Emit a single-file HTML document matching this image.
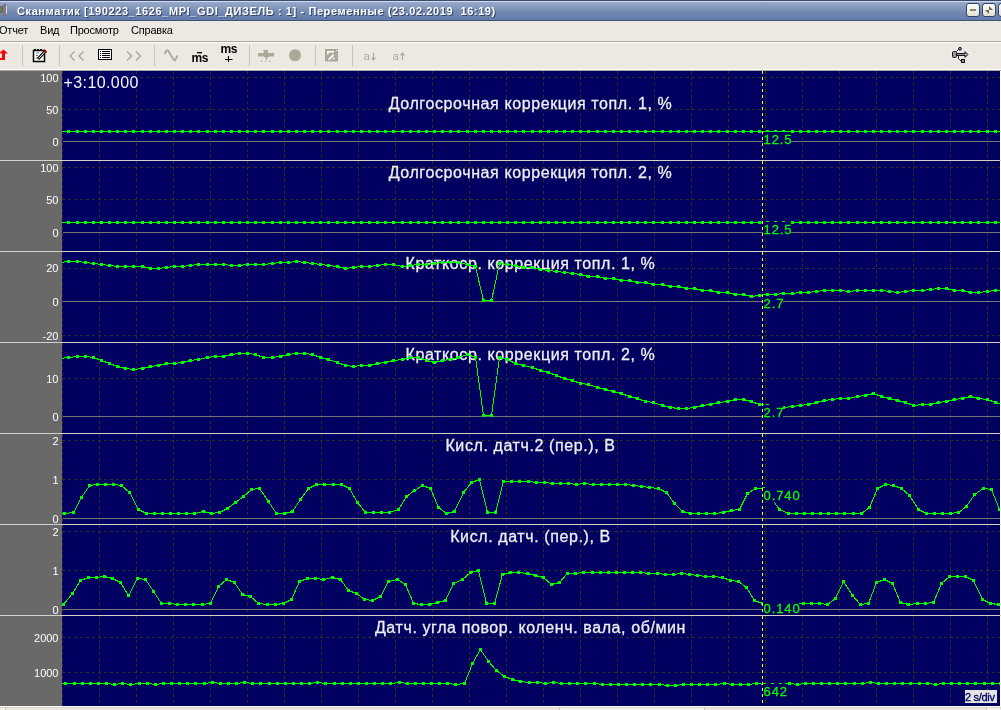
<!DOCTYPE html>
<html><head><meta charset="utf-8"><style>
html,body{margin:0;padding:0;}
body{width:1001px;height:710px;overflow:hidden;position:relative;background:#ebe9e1;font-family:"Liberation Sans",sans-serif;}
#title{position:absolute;left:0;top:0;width:1001px;height:21px;background:linear-gradient(#38496b 0px,#38496b 1px,#d2dbee 1px,#d2dbee 2px,#97a9c9 2px,#8a9ec2 6px,#7389b3 12px,#607ca9 20px,#42537a 20px);}
#title .t{will-change:transform;position:absolute;left:17px;top:5px;font-size:11px;font-weight:bold;color:#fff;white-space:pre;letter-spacing:0.6px;text-shadow:1px 1px 0 #344466;}
#menu{will-change:transform;position:absolute;left:0;top:21px;width:1001px;height:20px;background:#ebe9e1;border-bottom:1px solid #aca899;}
#menu span{position:absolute;top:3px;font-size:11px;color:#000;letter-spacing:-0.2px}
#tb{position:absolute;left:0;top:42px;width:1001px;height:26px;border-top:1px solid #fff;border-bottom:1px solid #fff;background:#ebe9e1;}
.btn{position:absolute;top:3px;width:12px;height:12px;border:1px solid #31466e;border-radius:3px;background:linear-gradient(#fdfcf8,#e4e0d0);}
</style></head><body>
<div id="title"><div class="t">Сканматик [190223_1626_MPI_GDI_ДИЗЕЛЬ : 1] - Переменные (23.02.2019  16:19)</div>
<div class="btn" style="left:966px"><div style="position:absolute;left:3px;top:5px;width:6px;height:2px;background:#8a8670"></div></div>
<div class="btn" style="left:982px"><svg width="12" height="12" style="position:absolute;left:0;top:0"><path d="M6 2l4 4h-4zM2 6h4v4z" fill="#6e6a55"/></svg></div>
<div class="btn" style="left:998px"></div>
<svg width="10" height="16" style="position:absolute;left:0;top:3px"><rect x="0" y="3" width="3" height="7" fill="#6a6a6a"/><rect x="3" y="1" width="3" height="12" fill="#7c7c7c"/><rect x="6" y="3" width="1" height="8" fill="#e8cce0"/><rect x="0" y="6" width="1" height="1" fill="#20d020"/></svg>
</div>
<div id="menu"><span style="left:-1px">Отчет</span><span style="left:40px">Вид</span><span style="left:70px">Просмотр</span><span style="left:131px">Справка</span></div>
<div id="tb"></div>
<svg width="1001" height="28" viewBox="0 42 1001 28" style="position:absolute;left:0;top:42px;will-change:transform" font-family="Liberation Sans">
<g fill="#cac6b7">
<rect x="22" y="45" width="1" height="21"/><rect x="59" y="45" width="1" height="21"/><rect x="154" y="45" width="1" height="21"/>
<rect x="249" y="45" width="1" height="21"/><rect x="315" y="45" width="1" height="21"/><rect x="352" y="45" width="1" height="21"/>
</g>
<path d="M-1 53L3.5 49.5L8 53.5H5V60H-1V58H2V53.5Z" fill="#ff0000"/>
<path d="M33.5 50.5h11v11h-11z" fill="#fff" stroke="#000" stroke-width="1.5"/>
<path d="M34 49h2v2h-2zM37 49h2v2h-2zM40 49h2v2h-2z" fill="#000"/>
<path d="M36 53h3M36 55.5h2M36 58h2" stroke="#777" stroke-width="1"/>
<path d="M38 59L45.5 51" stroke="#000" stroke-width="3"/><path d="M38.5 58.5L45 51.5" stroke="#fff" stroke-width="1"/>
<path d="M44 50l2.5 2.5" stroke="#a00" stroke-width="2"/>
<g fill="none" stroke="#aca899" stroke-width="1.4">
<path d="M74.5 51.5L70 56L74.5 60.5M83.5 51.5L79 56L83.5 60.5"/>
<path d="M127 51.5L131.5 56L127 60.5M136 51.5L140.5 56L136 60.5"/>
<path d="M164.5 54L166.5 50.5L168 50.5L173.5 59.5L175 60.5L177.5 55.5" stroke-width="1.8" stroke-linejoin="round"/>
</g>
<rect x="98" y="49" width="14" height="11" fill="#000"/><rect x="99" y="50" width="12" height="9" fill="#fff"/>
<g fill="#000"><rect x="100" y="51" width="1" height="1"/><rect x="100" y="53" width="1" height="1"/><rect x="100" y="55" width="1" height="1"/><rect x="100" y="57" width="1" height="1"/>
<rect x="102" y="51" width="8" height="1"/><rect x="102" y="53" width="8" height="1"/><rect x="102" y="55" width="8" height="1"/><rect x="102" y="57" width="8" height="1"/></g>
<text x="191.5" y="61.5" font-size="12" font-weight="bold" fill="#000" letter-spacing="-0.3">ms</text>
<rect x="197" y="52" width="5" height="1.3" fill="#000"/>
<text x="220.5" y="53" font-size="12" font-weight="bold" fill="#000" letter-spacing="-0.3">ms</text>
<path d="M225 59.5h7.5M228.5 56v6" stroke="#000" stroke-width="1.1"/>
<g fill="#aca899">
<path d="M258 53h16v3.5h-16z"/><path d="M263 50h5v3h1v4h-1.5v2.5h-2v-2.5h-1.5v-4z"/>
<rect x="261" y="60.5" width="1.2" height="1.5"/><rect x="265" y="60.5" width="1.2" height="1.5"/><rect x="269" y="60.5" width="1.2" height="1.5"/>
<circle cx="295" cy="55.2" r="6"/>
<rect x="325" y="49" width="13" height="12.5"/>
<path d="M327 51h7v1.6h-5.5v2h-1.5z" fill="#fff"/><path d="M328 59.5l5-5.5l1.2 1.2l-5 5.3z" fill="#fff"/><rect x="333" y="57.5" width="1.3" height="2" fill="#fff"/><rect x="336" y="50" width="1" height="1" fill="#fff"/>
</g>
<text x="363.5" y="60" font-size="11.5" fill="#aca899">a</text><path d="M373.5 53v6.5M371.5 57.5l2 2.5l2-2.5" stroke="#aca899" stroke-width="1.2" fill="none"/>
<text x="392.5" y="60" font-size="11.5" fill="#aca899">a</text><path d="M402.5 53v7M400.5 55.5l2-2.5l2 2.5" stroke="#aca899" stroke-width="1.2" fill="none"/>
<g stroke="#fff" stroke-width="3" fill="none" opacity="0.8"><path d="M953 52h3v5h-3z M956 54.3h10 M964.5 51.5l3.5 2.8l-3.5 2.8 M956.5 51.5l3-2.5 M958.5 56v3l2.5 2.5"/></g>
<g stroke="#111" stroke-width="1" fill="#9a9a9a">
<rect x="952.5" y="51.5" width="4" height="6" rx="1"/>
<path d="M956.5 53.5h8.5v-2l3 3l-3 3v-2h-8.5z"/>
<path d="M956.5 51.5L959 49" fill="none"/><circle cx="960" cy="48.8" r="1.4"/>
<path d="M958.5 56v3l2.5 2" fill="none"/><rect x="961.5" y="59.5" width="3" height="3"/>
</g>
</svg>
<svg width="1001" height="640" viewBox="0 70 1001 640" style="position:absolute;left:0;top:70px;display:block;will-change:transform" font-family="Liberation Sans">
<rect x="0" y="70" width="1001" height="1" fill="#a8a59a"/>
<rect x="0" y="71" width="62" height="635" fill="#696969"/>
<rect x="62" y="71" width="938" height="635" fill="#000060"/>
<rect x="1000" y="71" width="1" height="635" fill="#ffffff"/>
<clipPath id="c0"><rect x="62" y="71" width="938" height="89"/></clipPath>
<g clip-path="url(#c0)"><path d="M62.5 71V160M99.5 71V160M136.5 71V160M173.5 71V160M210.5 71V160M247.5 71V160M284.5 71V160M321.5 71V160M358.5 71V160M395.5 71V160M432.5 71V160M469.5 71V160M506.5 71V160M543.5 71V160M580.5 71V160M617.5 71V160M654.5 71V160M691.5 71V160M728.5 71V160M765.5 71V160M802.5 71V160M839.5 71V160M876.5 71V160M913.5 71V160M950.5 71V160M987.5 71V160M62 77.5H1000M62 109.5H1000" stroke="#302e24" stroke-width="1" stroke-dasharray="3 3" fill="none" shape-rendering="crispEdges"/><path d="M63 141.5H1000" stroke="#727272" stroke-width="1" shape-rendering="crispEdges"/><rect x="63" y="74" width="76" height="16" fill="#000060"/><text x="63.5" y="88" font-size="16" fill="#f4f4f4" letter-spacing="0.4">+3:10.000</text><text x="530.5" y="109" text-anchor="middle" font-size="16" letter-spacing="0.6" fill="#eeeeee" stroke="#eeeeee" stroke-width="0.3">Долгосрочная коррекция топл. 1, %</text><polyline points="60.5,131.5 68.5,131.5 77.5,131.5 85.5,131.5 93.5,131.5 101.5,131.5 109.5,131.5 117.5,131.5 125.5,131.5 133.5,131.5 142.5,131.5 150.5,131.5 158.5,131.5 166.5,131.5 174.5,131.5 182.5,131.5 190.5,131.5 198.5,131.5 207.5,131.5 215.5,131.5 223.5,131.5 231.5,131.5 239.5,131.5 247.5,131.5 255.5,131.5 263.5,131.5 272.5,131.5 280.5,131.5 288.5,131.5 296.5,131.5 304.5,131.5 312.5,131.5 320.5,131.5 328.5,131.5 337.5,131.5 345.5,131.5 353.5,131.5 361.5,131.5 369.5,131.5 377.5,131.5 385.5,131.5 393.5,131.5 402.5,131.5 410.5,131.5 418.5,131.5 426.5,131.5 434.5,131.5 442.5,131.5 450.5,131.5 458.5,131.5 467.5,131.5 475.5,131.5 483.5,131.5 491.5,131.5 499.5,131.5 507.5,131.5 515.5,131.5 523.5,131.5 532.5,131.5 540.5,131.5 548.5,131.5 556.5,131.5 564.5,131.5 572.5,131.5 580.5,131.5 588.5,131.5 597.5,131.5 605.5,131.5 613.5,131.5 621.5,131.5 629.5,131.5 637.5,131.5 645.5,131.5 653.5,131.5 662.5,131.5 670.5,131.5 678.5,131.5 686.5,131.5 694.5,131.5 702.5,131.5 710.5,131.5 718.5,131.5 727.5,131.5 735.5,131.5 743.5,131.5 751.5,131.5 759.5,131.5 767.5,131.5 775.5,131.5 783.5,131.5 792.5,131.5 800.5,131.5 808.5,131.5 816.5,131.5 824.5,131.5 832.5,131.5 840.5,131.5 848.5,131.5 857.5,131.5 865.5,131.5 873.5,131.5 881.5,131.5 889.5,131.5 897.5,131.5 905.5,131.5 913.5,131.5 922.5,131.5 930.5,131.5 938.5,131.5 946.5,131.5 954.5,131.5 962.5,131.5 970.5,131.5 978.5,131.5 987.5,131.5 995.5,131.5 1003.5,131.5" stroke="#00ff00" stroke-width="1" fill="none" shape-rendering="crispEdges"/><path d="M59 130h3v3h-3zM67 130h3v3h-3zM76 130h3v3h-3zM84 130h3v3h-3zM92 130h3v3h-3zM100 130h3v3h-3zM108 130h3v3h-3zM116 130h3v3h-3zM124 130h3v3h-3zM132 130h3v3h-3zM141 130h3v3h-3zM149 130h3v3h-3zM157 130h3v3h-3zM165 130h3v3h-3zM173 130h3v3h-3zM181 130h3v3h-3zM189 130h3v3h-3zM197 130h3v3h-3zM206 130h3v3h-3zM214 130h3v3h-3zM222 130h3v3h-3zM230 130h3v3h-3zM238 130h3v3h-3zM246 130h3v3h-3zM254 130h3v3h-3zM262 130h3v3h-3zM271 130h3v3h-3zM279 130h3v3h-3zM287 130h3v3h-3zM295 130h3v3h-3zM303 130h3v3h-3zM311 130h3v3h-3zM319 130h3v3h-3zM327 130h3v3h-3zM336 130h3v3h-3zM344 130h3v3h-3zM352 130h3v3h-3zM360 130h3v3h-3zM368 130h3v3h-3zM376 130h3v3h-3zM384 130h3v3h-3zM392 130h3v3h-3zM401 130h3v3h-3zM409 130h3v3h-3zM417 130h3v3h-3zM425 130h3v3h-3zM433 130h3v3h-3zM441 130h3v3h-3zM449 130h3v3h-3zM457 130h3v3h-3zM466 130h3v3h-3zM474 130h3v3h-3zM482 130h3v3h-3zM490 130h3v3h-3zM498 130h3v3h-3zM506 130h3v3h-3zM514 130h3v3h-3zM522 130h3v3h-3zM531 130h3v3h-3zM539 130h3v3h-3zM547 130h3v3h-3zM555 130h3v3h-3zM563 130h3v3h-3zM571 130h3v3h-3zM579 130h3v3h-3zM587 130h3v3h-3zM596 130h3v3h-3zM604 130h3v3h-3zM612 130h3v3h-3zM620 130h3v3h-3zM628 130h3v3h-3zM636 130h3v3h-3zM644 130h3v3h-3zM652 130h3v3h-3zM661 130h3v3h-3zM669 130h3v3h-3zM677 130h3v3h-3zM685 130h3v3h-3zM693 130h3v3h-3zM701 130h3v3h-3zM709 130h3v3h-3zM717 130h3v3h-3zM726 130h3v3h-3zM734 130h3v3h-3zM742 130h3v3h-3zM750 130h3v3h-3zM758 130h3v3h-3zM766 130h3v3h-3zM774 130h3v3h-3zM782 130h3v3h-3zM791 130h3v3h-3zM799 130h3v3h-3zM807 130h3v3h-3zM815 130h3v3h-3zM823 130h3v3h-3zM831 130h3v3h-3zM839 130h3v3h-3zM847 130h3v3h-3zM856 130h3v3h-3zM864 130h3v3h-3zM872 130h3v3h-3zM880 130h3v3h-3zM888 130h3v3h-3zM896 130h3v3h-3zM904 130h3v3h-3zM912 130h3v3h-3zM921 130h3v3h-3zM929 130h3v3h-3zM937 130h3v3h-3zM945 130h3v3h-3zM953 130h3v3h-3zM961 130h3v3h-3zM969 130h3v3h-3zM977 130h3v3h-3zM986 130h3v3h-3zM994 130h3v3h-3zM1002 130h3v3h-3z" fill="#00ff00" shape-rendering="crispEdges"/><path d="M762.5 71V160" stroke="#ffff00" stroke-width="1" stroke-dasharray="3 3" shape-rendering="crispEdges"/><rect x="763" y="132" width="28" height="14" fill="#000060"/><text x="763.5" y="144" font-size="13" letter-spacing="0.9" fill="#00ff00" stroke="#00ff00" stroke-width="0.3">12.5</text></g>
<text x="58.5" y="82" text-anchor="end" font-size="11" fill="#ffffff">100</text>
<text x="58.5" y="114" text-anchor="end" font-size="11" fill="#ffffff">50</text>
<text x="58.5" y="146" text-anchor="end" font-size="11" fill="#ffffff">0</text>
<rect x="0" y="160" width="1001" height="1" fill="#d4d0c8"/>
<clipPath id="c1"><rect x="62" y="161" width="938" height="90"/></clipPath>
<g clip-path="url(#c1)"><path d="M62.5 161V251M99.5 161V251M136.5 161V251M173.5 161V251M210.5 161V251M247.5 161V251M284.5 161V251M321.5 161V251M358.5 161V251M395.5 161V251M432.5 161V251M469.5 161V251M506.5 161V251M543.5 161V251M580.5 161V251M617.5 161V251M654.5 161V251M691.5 161V251M728.5 161V251M765.5 161V251M802.5 161V251M839.5 161V251M876.5 161V251M913.5 161V251M950.5 161V251M987.5 161V251M62 167.5H1000M62 199.5H1000" stroke="#302e24" stroke-width="1" stroke-dasharray="3 3" fill="none" shape-rendering="crispEdges"/><path d="M63 232.5H1000" stroke="#727272" stroke-width="1" shape-rendering="crispEdges"/><text x="530.5" y="178" text-anchor="middle" font-size="16" letter-spacing="0.6" fill="#eeeeee" stroke="#eeeeee" stroke-width="0.3">Долгосрочная коррекция топл. 2, %</text><polyline points="60.5,222.5 68.5,222.5 77.5,222.5 85.5,222.5 93.5,222.5 101.5,222.5 109.5,222.5 117.5,222.5 125.5,222.5 133.5,222.5 142.5,222.5 150.5,222.5 158.5,222.5 166.5,222.5 174.5,222.5 182.5,222.5 190.5,222.5 198.5,222.5 207.5,222.5 215.5,222.5 223.5,222.5 231.5,222.5 239.5,222.5 247.5,222.5 255.5,222.5 263.5,222.5 272.5,222.5 280.5,222.5 288.5,222.5 296.5,222.5 304.5,222.5 312.5,222.5 320.5,222.5 328.5,222.5 337.5,222.5 345.5,222.5 353.5,222.5 361.5,222.5 369.5,222.5 377.5,222.5 385.5,222.5 393.5,222.5 402.5,222.5 410.5,222.5 418.5,222.5 426.5,222.5 434.5,222.5 442.5,222.5 450.5,222.5 458.5,222.5 467.5,222.5 475.5,222.5 483.5,222.5 491.5,222.5 499.5,222.5 507.5,222.5 515.5,222.5 523.5,222.5 532.5,222.5 540.5,222.5 548.5,222.5 556.5,222.5 564.5,222.5 572.5,222.5 580.5,222.5 588.5,222.5 597.5,222.5 605.5,222.5 613.5,222.5 621.5,222.5 629.5,222.5 637.5,222.5 645.5,222.5 653.5,222.5 662.5,222.5 670.5,222.5 678.5,222.5 686.5,222.5 694.5,222.5 702.5,222.5 710.5,222.5 718.5,222.5 727.5,222.5 735.5,222.5 743.5,222.5 751.5,222.5 759.5,222.5 767.5,222.5 775.5,222.5 783.5,222.5 792.5,222.5 800.5,222.5 808.5,222.5 816.5,222.5 824.5,222.5 832.5,222.5 840.5,222.5 848.5,222.5 857.5,222.5 865.5,222.5 873.5,222.5 881.5,222.5 889.5,222.5 897.5,222.5 905.5,222.5 913.5,222.5 922.5,222.5 930.5,222.5 938.5,222.5 946.5,222.5 954.5,222.5 962.5,222.5 970.5,222.5 978.5,222.5 987.5,222.5 995.5,222.5 1003.5,222.5" stroke="#00ff00" stroke-width="1" fill="none" shape-rendering="crispEdges"/><path d="M59 221h3v3h-3zM67 221h3v3h-3zM76 221h3v3h-3zM84 221h3v3h-3zM92 221h3v3h-3zM100 221h3v3h-3zM108 221h3v3h-3zM116 221h3v3h-3zM124 221h3v3h-3zM132 221h3v3h-3zM141 221h3v3h-3zM149 221h3v3h-3zM157 221h3v3h-3zM165 221h3v3h-3zM173 221h3v3h-3zM181 221h3v3h-3zM189 221h3v3h-3zM197 221h3v3h-3zM206 221h3v3h-3zM214 221h3v3h-3zM222 221h3v3h-3zM230 221h3v3h-3zM238 221h3v3h-3zM246 221h3v3h-3zM254 221h3v3h-3zM262 221h3v3h-3zM271 221h3v3h-3zM279 221h3v3h-3zM287 221h3v3h-3zM295 221h3v3h-3zM303 221h3v3h-3zM311 221h3v3h-3zM319 221h3v3h-3zM327 221h3v3h-3zM336 221h3v3h-3zM344 221h3v3h-3zM352 221h3v3h-3zM360 221h3v3h-3zM368 221h3v3h-3zM376 221h3v3h-3zM384 221h3v3h-3zM392 221h3v3h-3zM401 221h3v3h-3zM409 221h3v3h-3zM417 221h3v3h-3zM425 221h3v3h-3zM433 221h3v3h-3zM441 221h3v3h-3zM449 221h3v3h-3zM457 221h3v3h-3zM466 221h3v3h-3zM474 221h3v3h-3zM482 221h3v3h-3zM490 221h3v3h-3zM498 221h3v3h-3zM506 221h3v3h-3zM514 221h3v3h-3zM522 221h3v3h-3zM531 221h3v3h-3zM539 221h3v3h-3zM547 221h3v3h-3zM555 221h3v3h-3zM563 221h3v3h-3zM571 221h3v3h-3zM579 221h3v3h-3zM587 221h3v3h-3zM596 221h3v3h-3zM604 221h3v3h-3zM612 221h3v3h-3zM620 221h3v3h-3zM628 221h3v3h-3zM636 221h3v3h-3zM644 221h3v3h-3zM652 221h3v3h-3zM661 221h3v3h-3zM669 221h3v3h-3zM677 221h3v3h-3zM685 221h3v3h-3zM693 221h3v3h-3zM701 221h3v3h-3zM709 221h3v3h-3zM717 221h3v3h-3zM726 221h3v3h-3zM734 221h3v3h-3zM742 221h3v3h-3zM750 221h3v3h-3zM758 221h3v3h-3zM766 221h3v3h-3zM774 221h3v3h-3zM782 221h3v3h-3zM791 221h3v3h-3zM799 221h3v3h-3zM807 221h3v3h-3zM815 221h3v3h-3zM823 221h3v3h-3zM831 221h3v3h-3zM839 221h3v3h-3zM847 221h3v3h-3zM856 221h3v3h-3zM864 221h3v3h-3zM872 221h3v3h-3zM880 221h3v3h-3zM888 221h3v3h-3zM896 221h3v3h-3zM904 221h3v3h-3zM912 221h3v3h-3zM921 221h3v3h-3zM929 221h3v3h-3zM937 221h3v3h-3zM945 221h3v3h-3zM953 221h3v3h-3zM961 221h3v3h-3zM969 221h3v3h-3zM977 221h3v3h-3zM986 221h3v3h-3zM994 221h3v3h-3zM1002 221h3v3h-3z" fill="#00ff00" shape-rendering="crispEdges"/><path d="M762.5 161V251" stroke="#ffff00" stroke-width="1" stroke-dasharray="3 3" shape-rendering="crispEdges"/><rect x="763" y="222" width="28" height="14" fill="#000060"/><text x="763.5" y="234" font-size="13" letter-spacing="0.9" fill="#00ff00" stroke="#00ff00" stroke-width="0.3">12.5</text></g>
<text x="58.5" y="172" text-anchor="end" font-size="11" fill="#ffffff">100</text>
<text x="58.5" y="204" text-anchor="end" font-size="11" fill="#ffffff">50</text>
<text x="58.5" y="237" text-anchor="end" font-size="11" fill="#ffffff">0</text>
<rect x="0" y="251" width="1001" height="1" fill="#d4d0c8"/>
<clipPath id="c2"><rect x="62" y="252" width="938" height="90"/></clipPath>
<g clip-path="url(#c2)"><path d="M62.5 252V342M99.5 252V342M136.5 252V342M173.5 252V342M210.5 252V342M247.5 252V342M284.5 252V342M321.5 252V342M358.5 252V342M395.5 252V342M432.5 252V342M469.5 252V342M506.5 252V342M543.5 252V342M580.5 252V342M617.5 252V342M654.5 252V342M691.5 252V342M728.5 252V342M765.5 252V342M802.5 252V342M839.5 252V342M876.5 252V342M913.5 252V342M950.5 252V342M987.5 252V342M62 268.5H1000M62 335.5H1000" stroke="#302e24" stroke-width="1" stroke-dasharray="3 3" fill="none" shape-rendering="crispEdges"/><path d="M63 301.5H1000" stroke="#727272" stroke-width="1" shape-rendering="crispEdges"/><text x="530.5" y="269" text-anchor="middle" font-size="16" letter-spacing="0.6" fill="#eeeeee" stroke="#eeeeee" stroke-width="0.3">Краткоср. коррекция топл. 1, %</text><polyline points="60.5,262.5 68.5,261.5 77.5,261.5 85.5,262.5 93.5,263.5 101.5,264.5 109.5,265.5 117.5,266.5 125.5,266.5 133.5,266.5 142.5,266.5 150.5,268.5 158.5,268.5 166.5,267.5 174.5,266.5 182.5,266.5 190.5,265.5 198.5,264.5 207.5,264.5 215.5,264.5 223.5,264.5 231.5,265.5 239.5,265.5 247.5,264.5 255.5,264.5 263.5,264.5 272.5,263.5 280.5,262.5 288.5,262.5 296.5,261.5 304.5,262.5 312.5,263.5 320.5,264.5 328.5,265.5 337.5,266.5 345.5,268.5 353.5,267.5 361.5,266.5 369.5,266.5 377.5,265.5 385.5,264.5 393.5,264.5 402.5,266.5 410.5,265.5 418.5,264.5 426.5,264.5 434.5,263.5 442.5,262.5 450.5,262.5 458.5,262.5 467.5,264.5 475.5,266.5 483.5,300.5 491.5,300.5 499.5,263.5 507.5,264.5 515.5,265.5 523.5,267.5 532.5,267.5 540.5,269.5 548.5,270.5 556.5,271.5 564.5,272.5 572.5,273.5 580.5,274.5 588.5,276.5 597.5,276.5 605.5,278.5 613.5,278.5 621.5,280.5 629.5,280.5 637.5,282.5 645.5,282.5 653.5,284.5 662.5,284.5 670.5,286.5 678.5,286.5 686.5,288.5 694.5,288.5 702.5,290.5 710.5,290.5 718.5,292.5 727.5,292.5 735.5,294.5 743.5,294.5 751.5,296.5 759.5,295.5 767.5,294.5 775.5,294.5 783.5,293.5 792.5,293.5 800.5,292.5 808.5,292.5 816.5,291.5 824.5,290.5 832.5,290.5 840.5,290.5 848.5,291.5 857.5,290.5 865.5,290.5 873.5,290.5 881.5,290.5 889.5,291.5 897.5,292.5 905.5,291.5 913.5,290.5 922.5,290.5 930.5,289.5 938.5,288.5 946.5,288.5 954.5,290.5 962.5,290.5 970.5,292.5 978.5,292.5 987.5,291.5 995.5,290.5 1003.5,290.5" stroke="#00ff00" stroke-width="1" fill="none" shape-rendering="crispEdges"/><path d="M59 261h3v3h-3zM67 260h3v3h-3zM76 260h3v3h-3zM84 261h3v3h-3zM92 262h3v3h-3zM100 263h3v3h-3zM108 264h3v3h-3zM116 265h3v3h-3zM124 265h3v3h-3zM132 265h3v3h-3zM141 265h3v3h-3zM149 267h3v3h-3zM157 267h3v3h-3zM165 266h3v3h-3zM173 265h3v3h-3zM181 265h3v3h-3zM189 264h3v3h-3zM197 263h3v3h-3zM206 263h3v3h-3zM214 263h3v3h-3zM222 263h3v3h-3zM230 264h3v3h-3zM238 264h3v3h-3zM246 263h3v3h-3zM254 263h3v3h-3zM262 263h3v3h-3zM271 262h3v3h-3zM279 261h3v3h-3zM287 261h3v3h-3zM295 260h3v3h-3zM303 261h3v3h-3zM311 262h3v3h-3zM319 263h3v3h-3zM327 264h3v3h-3zM336 265h3v3h-3zM344 267h3v3h-3zM352 266h3v3h-3zM360 265h3v3h-3zM368 265h3v3h-3zM376 264h3v3h-3zM384 263h3v3h-3zM392 263h3v3h-3zM401 265h3v3h-3zM409 264h3v3h-3zM417 263h3v3h-3zM425 263h3v3h-3zM433 262h3v3h-3zM441 261h3v3h-3zM449 261h3v3h-3zM457 261h3v3h-3zM466 263h3v3h-3zM474 265h3v3h-3zM482 299h3v3h-3zM490 299h3v3h-3zM498 262h3v3h-3zM506 263h3v3h-3zM514 264h3v3h-3zM522 266h3v3h-3zM531 266h3v3h-3zM539 268h3v3h-3zM547 269h3v3h-3zM555 270h3v3h-3zM563 271h3v3h-3zM571 272h3v3h-3zM579 273h3v3h-3zM587 275h3v3h-3zM596 275h3v3h-3zM604 277h3v3h-3zM612 277h3v3h-3zM620 279h3v3h-3zM628 279h3v3h-3zM636 281h3v3h-3zM644 281h3v3h-3zM652 283h3v3h-3zM661 283h3v3h-3zM669 285h3v3h-3zM677 285h3v3h-3zM685 287h3v3h-3zM693 287h3v3h-3zM701 289h3v3h-3zM709 289h3v3h-3zM717 291h3v3h-3zM726 291h3v3h-3zM734 293h3v3h-3zM742 293h3v3h-3zM750 295h3v3h-3zM758 294h3v3h-3zM766 293h3v3h-3zM774 293h3v3h-3zM782 292h3v3h-3zM791 292h3v3h-3zM799 291h3v3h-3zM807 291h3v3h-3zM815 290h3v3h-3zM823 289h3v3h-3zM831 289h3v3h-3zM839 289h3v3h-3zM847 290h3v3h-3zM856 289h3v3h-3zM864 289h3v3h-3zM872 289h3v3h-3zM880 289h3v3h-3zM888 290h3v3h-3zM896 291h3v3h-3zM904 290h3v3h-3zM912 289h3v3h-3zM921 289h3v3h-3zM929 288h3v3h-3zM937 287h3v3h-3zM945 287h3v3h-3zM953 289h3v3h-3zM961 289h3v3h-3zM969 291h3v3h-3zM977 291h3v3h-3zM986 290h3v3h-3zM994 289h3v3h-3zM1002 289h3v3h-3z" fill="#00ff00" shape-rendering="crispEdges"/><path d="M762.5 252V342" stroke="#ffff00" stroke-width="1" stroke-dasharray="3 3" shape-rendering="crispEdges"/><rect x="763" y="296" width="20" height="14" fill="#000060"/><text x="763.5" y="308" font-size="13" letter-spacing="0.9" fill="#00ff00" stroke="#00ff00" stroke-width="0.3">2.7</text></g>
<text x="58.5" y="272" text-anchor="end" font-size="11" fill="#ffffff">20</text>
<text x="58.5" y="306" text-anchor="end" font-size="11" fill="#ffffff">0</text>
<text x="58.5" y="340" text-anchor="end" font-size="11" fill="#ffffff">-20</text>
<rect x="0" y="342" width="1001" height="1" fill="#d4d0c8"/>
<clipPath id="c3"><rect x="62" y="343" width="938" height="90"/></clipPath>
<g clip-path="url(#c3)"><path d="M62.5 343V433M99.5 343V433M136.5 343V433M173.5 343V433M210.5 343V433M247.5 343V433M284.5 343V433M321.5 343V433M358.5 343V433M395.5 343V433M432.5 343V433M469.5 343V433M506.5 343V433M543.5 343V433M580.5 343V433M617.5 343V433M654.5 343V433M691.5 343V433M728.5 343V433M765.5 343V433M802.5 343V433M839.5 343V433M876.5 343V433M913.5 343V433M950.5 343V433M987.5 343V433M62 378.5H1000" stroke="#302e24" stroke-width="1" stroke-dasharray="3 3" fill="none" shape-rendering="crispEdges"/><path d="M63 416.5H1000" stroke="#727272" stroke-width="1" shape-rendering="crispEdges"/><text x="530.5" y="360" text-anchor="middle" font-size="16" letter-spacing="0.6" fill="#eeeeee" stroke="#eeeeee" stroke-width="0.3">Краткоср. коррекция топл. 2, %</text><polyline points="60.5,358.5 68.5,357.5 77.5,356.5 85.5,356.5 93.5,357.5 101.5,360.5 109.5,363.5 117.5,366.5 125.5,368.5 133.5,369.5 142.5,368.5 150.5,366.5 158.5,365.5 166.5,363.5 174.5,363.5 182.5,362.5 190.5,360.5 198.5,359.5 207.5,357.5 215.5,356.5 223.5,356.5 231.5,354.5 239.5,353.5 247.5,353.5 255.5,354.5 263.5,357.5 272.5,357.5 280.5,356.5 288.5,354.5 296.5,353.5 304.5,353.5 312.5,354.5 320.5,357.5 328.5,359.5 337.5,362.5 345.5,365.5 353.5,366.5 361.5,365.5 369.5,365.5 377.5,363.5 385.5,362.5 393.5,360.5 402.5,359.5 410.5,357.5 418.5,357.5 426.5,360.5 434.5,362.5 442.5,360.5 450.5,359.5 458.5,357.5 467.5,354.5 475.5,357.5 483.5,415.5 491.5,415.5 499.5,357.5 507.5,359.5 515.5,363.5 523.5,365.5 532.5,367.5 540.5,370.5 548.5,372.5 556.5,375.5 564.5,378.5 572.5,380.5 580.5,383.5 588.5,384.5 597.5,387.5 605.5,389.5 613.5,391.5 621.5,393.5 629.5,396.5 637.5,398.5 645.5,401.5 653.5,402.5 662.5,405.5 670.5,407.5 678.5,408.5 686.5,408.5 694.5,407.5 702.5,405.5 710.5,404.5 718.5,402.5 727.5,401.5 735.5,399.5 743.5,399.5 751.5,401.5 759.5,404.5 767.5,405.5 775.5,406.5 783.5,407.5 792.5,406.5 800.5,405.5 808.5,404.5 816.5,402.5 824.5,400.5 832.5,399.5 840.5,398.5 848.5,398.5 857.5,396.5 865.5,395.5 873.5,393.5 881.5,396.5 889.5,398.5 897.5,400.5 905.5,402.5 913.5,405.5 922.5,404.5 930.5,404.5 938.5,402.5 946.5,401.5 954.5,399.5 962.5,398.5 970.5,396.5 978.5,398.5 987.5,399.5 995.5,402.5 1003.5,404.5" stroke="#00ff00" stroke-width="1" fill="none" shape-rendering="crispEdges"/><path d="M59 357h3v3h-3zM67 356h3v3h-3zM76 355h3v3h-3zM84 355h3v3h-3zM92 356h3v3h-3zM100 359h3v3h-3zM108 362h3v3h-3zM116 365h3v3h-3zM124 367h3v3h-3zM132 368h3v3h-3zM141 367h3v3h-3zM149 365h3v3h-3zM157 364h3v3h-3zM165 362h3v3h-3zM173 362h3v3h-3zM181 361h3v3h-3zM189 359h3v3h-3zM197 358h3v3h-3zM206 356h3v3h-3zM214 355h3v3h-3zM222 355h3v3h-3zM230 353h3v3h-3zM238 352h3v3h-3zM246 352h3v3h-3zM254 353h3v3h-3zM262 356h3v3h-3zM271 356h3v3h-3zM279 355h3v3h-3zM287 353h3v3h-3zM295 352h3v3h-3zM303 352h3v3h-3zM311 353h3v3h-3zM319 356h3v3h-3zM327 358h3v3h-3zM336 361h3v3h-3zM344 364h3v3h-3zM352 365h3v3h-3zM360 364h3v3h-3zM368 364h3v3h-3zM376 362h3v3h-3zM384 361h3v3h-3zM392 359h3v3h-3zM401 358h3v3h-3zM409 356h3v3h-3zM417 356h3v3h-3zM425 359h3v3h-3zM433 361h3v3h-3zM441 359h3v3h-3zM449 358h3v3h-3zM457 356h3v3h-3zM466 353h3v3h-3zM474 356h3v3h-3zM482 414h3v3h-3zM490 414h3v3h-3zM498 356h3v3h-3zM506 358h3v3h-3zM514 362h3v3h-3zM522 364h3v3h-3zM531 366h3v3h-3zM539 369h3v3h-3zM547 371h3v3h-3zM555 374h3v3h-3zM563 377h3v3h-3zM571 379h3v3h-3zM579 382h3v3h-3zM587 383h3v3h-3zM596 386h3v3h-3zM604 388h3v3h-3zM612 390h3v3h-3zM620 392h3v3h-3zM628 395h3v3h-3zM636 397h3v3h-3zM644 400h3v3h-3zM652 401h3v3h-3zM661 404h3v3h-3zM669 406h3v3h-3zM677 407h3v3h-3zM685 407h3v3h-3zM693 406h3v3h-3zM701 404h3v3h-3zM709 403h3v3h-3zM717 401h3v3h-3zM726 400h3v3h-3zM734 398h3v3h-3zM742 398h3v3h-3zM750 400h3v3h-3zM758 403h3v3h-3zM766 404h3v3h-3zM774 405h3v3h-3zM782 406h3v3h-3zM791 405h3v3h-3zM799 404h3v3h-3zM807 403h3v3h-3zM815 401h3v3h-3zM823 399h3v3h-3zM831 398h3v3h-3zM839 397h3v3h-3zM847 397h3v3h-3zM856 395h3v3h-3zM864 394h3v3h-3zM872 392h3v3h-3zM880 395h3v3h-3zM888 397h3v3h-3zM896 399h3v3h-3zM904 401h3v3h-3zM912 404h3v3h-3zM921 403h3v3h-3zM929 403h3v3h-3zM937 401h3v3h-3zM945 400h3v3h-3zM953 398h3v3h-3zM961 397h3v3h-3zM969 395h3v3h-3zM977 397h3v3h-3zM986 398h3v3h-3zM994 401h3v3h-3zM1002 403h3v3h-3z" fill="#00ff00" shape-rendering="crispEdges"/><path d="M762.5 343V433" stroke="#ffff00" stroke-width="1" stroke-dasharray="3 3" shape-rendering="crispEdges"/><rect x="763" y="405" width="20" height="14" fill="#000060"/><text x="763.5" y="417" font-size="13" letter-spacing="0.9" fill="#00ff00" stroke="#00ff00" stroke-width="0.3">2.7</text></g>
<text x="58.5" y="383" text-anchor="end" font-size="11" fill="#ffffff">10</text>
<text x="58.5" y="421" text-anchor="end" font-size="11" fill="#ffffff">0</text>
<rect x="0" y="433" width="1001" height="1" fill="#d4d0c8"/>
<clipPath id="c4"><rect x="62" y="434" width="938" height="90"/></clipPath>
<g clip-path="url(#c4)"><path d="M62.5 434V524M99.5 434V524M136.5 434V524M173.5 434V524M210.5 434V524M247.5 434V524M284.5 434V524M321.5 434V524M358.5 434V524M395.5 434V524M432.5 434V524M469.5 434V524M506.5 434V524M543.5 434V524M580.5 434V524M617.5 434V524M654.5 434V524M691.5 434V524M728.5 434V524M765.5 434V524M802.5 434V524M839.5 434V524M876.5 434V524M913.5 434V524M950.5 434V524M987.5 434V524M62 440.5H1000M62 479.5H1000" stroke="#302e24" stroke-width="1" stroke-dasharray="3 3" fill="none" shape-rendering="crispEdges"/><path d="M63 518.5H1000" stroke="#727272" stroke-width="1" shape-rendering="crispEdges"/><text x="530.5" y="451" text-anchor="middle" font-size="16" letter-spacing="0.6" fill="#eeeeee" stroke="#eeeeee" stroke-width="0.3">Кисл. датч.2 (пер.), В</text><polyline points="56.5,513.5 64.5,513.5 73.5,512.5 81.5,497.5 89.5,485.5 97.5,484.5 105.5,484.5 113.5,484.5 121.5,485.5 129.5,492.5 138.5,509.5 146.5,513.5 154.5,513.5 162.5,513.5 170.5,513.5 178.5,513.5 186.5,513.5 194.5,513.5 203.5,511.5 211.5,513.5 219.5,512.5 227.5,508.5 235.5,502.5 243.5,496.5 251.5,489.5 259.5,488.5 268.5,501.5 276.5,513.5 284.5,513.5 292.5,511.5 300.5,499.5 308.5,488.5 316.5,484.5 324.5,484.5 333.5,484.5 341.5,484.5 349.5,488.5 357.5,502.5 365.5,512.5 373.5,512.5 381.5,512.5 389.5,512.5 398.5,509.5 406.5,496.5 414.5,490.5 422.5,485.5 430.5,488.5 438.5,507.5 446.5,513.5 454.5,511.5 463.5,492.5 471.5,482.5 479.5,479.5 487.5,512.5 495.5,512.5 503.5,481.5 511.5,481.5 519.5,481.5 528.5,481.5 536.5,482.5 544.5,482.5 552.5,483.5 560.5,483.5 568.5,483.5 576.5,484.5 584.5,483.5 593.5,484.5 601.5,484.5 609.5,484.5 617.5,484.5 625.5,484.5 633.5,485.5 641.5,486.5 649.5,487.5 658.5,488.5 666.5,492.5 674.5,503.5 682.5,511.5 690.5,513.5 698.5,513.5 706.5,513.5 714.5,513.5 723.5,512.5 731.5,510.5 739.5,509.5 747.5,493.5 755.5,488.5 763.5,488.5 771.5,498.5 779.5,509.5 788.5,513.5 796.5,513.5 804.5,513.5 812.5,513.5 820.5,513.5 828.5,513.5 836.5,513.5 844.5,513.5 853.5,513.5 861.5,513.5 869.5,507.5 877.5,488.5 885.5,484.5 893.5,485.5 901.5,488.5 909.5,495.5 918.5,509.5 926.5,513.5 934.5,513.5 942.5,513.5 950.5,513.5 958.5,512.5 966.5,506.5 974.5,494.5 983.5,488.5 991.5,489.5 999.5,509.5 1007.5,513.5" stroke="#00ff00" stroke-width="1" fill="none" shape-rendering="crispEdges"/><path d="M55 512h3v3h-3zM63 512h3v3h-3zM72 511h3v3h-3zM80 496h3v3h-3zM88 484h3v3h-3zM96 483h3v3h-3zM104 483h3v3h-3zM112 483h3v3h-3zM120 484h3v3h-3zM128 491h3v3h-3zM137 508h3v3h-3zM145 512h3v3h-3zM153 512h3v3h-3zM161 512h3v3h-3zM169 512h3v3h-3zM177 512h3v3h-3zM185 512h3v3h-3zM193 512h3v3h-3zM202 510h3v3h-3zM210 512h3v3h-3zM218 511h3v3h-3zM226 507h3v3h-3zM234 501h3v3h-3zM242 495h3v3h-3zM250 488h3v3h-3zM258 487h3v3h-3zM267 500h3v3h-3zM275 512h3v3h-3zM283 512h3v3h-3zM291 510h3v3h-3zM299 498h3v3h-3zM307 487h3v3h-3zM315 483h3v3h-3zM323 483h3v3h-3zM332 483h3v3h-3zM340 483h3v3h-3zM348 487h3v3h-3zM356 501h3v3h-3zM364 511h3v3h-3zM372 511h3v3h-3zM380 511h3v3h-3zM388 511h3v3h-3zM397 508h3v3h-3zM405 495h3v3h-3zM413 489h3v3h-3zM421 484h3v3h-3zM429 487h3v3h-3zM437 506h3v3h-3zM445 512h3v3h-3zM453 510h3v3h-3zM462 491h3v3h-3zM470 481h3v3h-3zM478 478h3v3h-3zM486 511h3v3h-3zM494 511h3v3h-3zM502 480h3v3h-3zM510 480h3v3h-3zM518 480h3v3h-3zM527 480h3v3h-3zM535 481h3v3h-3zM543 481h3v3h-3zM551 482h3v3h-3zM559 482h3v3h-3zM567 482h3v3h-3zM575 483h3v3h-3zM583 482h3v3h-3zM592 483h3v3h-3zM600 483h3v3h-3zM608 483h3v3h-3zM616 483h3v3h-3zM624 483h3v3h-3zM632 484h3v3h-3zM640 485h3v3h-3zM648 486h3v3h-3zM657 487h3v3h-3zM665 491h3v3h-3zM673 502h3v3h-3zM681 510h3v3h-3zM689 512h3v3h-3zM697 512h3v3h-3zM705 512h3v3h-3zM713 512h3v3h-3zM722 511h3v3h-3zM730 509h3v3h-3zM738 508h3v3h-3zM746 492h3v3h-3zM754 487h3v3h-3zM762 487h3v3h-3zM770 497h3v3h-3zM778 508h3v3h-3zM787 512h3v3h-3zM795 512h3v3h-3zM803 512h3v3h-3zM811 512h3v3h-3zM819 512h3v3h-3zM827 512h3v3h-3zM835 512h3v3h-3zM843 512h3v3h-3zM852 512h3v3h-3zM860 512h3v3h-3zM868 506h3v3h-3zM876 487h3v3h-3zM884 483h3v3h-3zM892 484h3v3h-3zM900 487h3v3h-3zM908 494h3v3h-3zM917 508h3v3h-3zM925 512h3v3h-3zM933 512h3v3h-3zM941 512h3v3h-3zM949 512h3v3h-3zM957 511h3v3h-3zM965 505h3v3h-3zM973 493h3v3h-3zM982 487h3v3h-3zM990 488h3v3h-3zM998 508h3v3h-3zM1006 512h3v3h-3z" fill="#00ff00" shape-rendering="crispEdges"/><path d="M762.5 434V524" stroke="#ffff00" stroke-width="1" stroke-dasharray="3 3" shape-rendering="crispEdges"/><rect x="763" y="488" width="36" height="14" fill="#000060"/><text x="763.5" y="500" font-size="13" letter-spacing="0.9" fill="#00ff00" stroke="#00ff00" stroke-width="0.3">0.740</text></g>
<text x="58.5" y="445" text-anchor="end" font-size="11" fill="#ffffff">2</text>
<text x="58.5" y="484" text-anchor="end" font-size="11" fill="#ffffff">1</text>
<text x="58.5" y="523" text-anchor="end" font-size="11" fill="#ffffff">0</text>
<rect x="0" y="524" width="1001" height="1" fill="#d4d0c8"/>
<clipPath id="c5"><rect x="62" y="525" width="938" height="90"/></clipPath>
<g clip-path="url(#c5)"><path d="M62.5 525V615M99.5 525V615M136.5 525V615M173.5 525V615M210.5 525V615M247.5 525V615M284.5 525V615M321.5 525V615M358.5 525V615M395.5 525V615M432.5 525V615M469.5 525V615M506.5 525V615M543.5 525V615M580.5 525V615M617.5 525V615M654.5 525V615M691.5 525V615M728.5 525V615M765.5 525V615M802.5 525V615M839.5 525V615M876.5 525V615M913.5 525V615M950.5 525V615M987.5 525V615M62 531.5H1000M62 570.5H1000" stroke="#302e24" stroke-width="1" stroke-dasharray="3 3" fill="none" shape-rendering="crispEdges"/><path d="M63 609.5H1000" stroke="#727272" stroke-width="1" shape-rendering="crispEdges"/><text x="530.5" y="542" text-anchor="middle" font-size="16" letter-spacing="0.6" fill="#eeeeee" stroke="#eeeeee" stroke-width="0.3">Кисл. датч. (пер.), В</text><polyline points="55.5,610.5 63.5,604.5 72.5,593.5 80.5,580.5 88.5,577.5 96.5,577.5 104.5,576.5 112.5,578.5 120.5,582.5 128.5,595.5 137.5,578.5 145.5,579.5 153.5,591.5 161.5,603.5 169.5,603.5 177.5,604.5 185.5,604.5 193.5,604.5 202.5,604.5 210.5,603.5 218.5,586.5 226.5,579.5 234.5,582.5 242.5,594.5 250.5,596.5 258.5,603.5 267.5,604.5 275.5,604.5 283.5,603.5 291.5,599.5 299.5,581.5 307.5,578.5 315.5,578.5 323.5,579.5 332.5,577.5 340.5,579.5 348.5,590.5 356.5,593.5 364.5,599.5 372.5,600.5 380.5,596.5 388.5,581.5 397.5,579.5 405.5,584.5 413.5,603.5 421.5,604.5 429.5,604.5 437.5,602.5 445.5,600.5 453.5,583.5 462.5,579.5 470.5,572.5 478.5,570.5 486.5,603.5 494.5,603.5 502.5,574.5 510.5,572.5 518.5,572.5 527.5,573.5 535.5,575.5 543.5,577.5 551.5,584.5 559.5,582.5 567.5,573.5 575.5,573.5 583.5,572.5 592.5,572.5 600.5,572.5 608.5,572.5 616.5,572.5 624.5,572.5 632.5,572.5 640.5,572.5 648.5,573.5 657.5,573.5 665.5,574.5 673.5,574.5 681.5,573.5 689.5,574.5 697.5,575.5 705.5,576.5 713.5,576.5 722.5,577.5 730.5,580.5 738.5,581.5 746.5,587.5 754.5,600.5 762.5,603.5 770.5,603.5 778.5,603.5 787.5,603.5 795.5,603.5 803.5,603.5 811.5,603.5 819.5,603.5 827.5,604.5 835.5,598.5 843.5,581.5 852.5,595.5 860.5,604.5 868.5,603.5 876.5,582.5 884.5,579.5 892.5,583.5 900.5,602.5 908.5,604.5 917.5,603.5 925.5,603.5 933.5,602.5 941.5,583.5 949.5,576.5 957.5,576.5 965.5,576.5 973.5,580.5 982.5,599.5 990.5,603.5 998.5,604.5 1006.5,604.5" stroke="#00ff00" stroke-width="1" fill="none" shape-rendering="crispEdges"/><path d="M54 609h3v3h-3zM62 603h3v3h-3zM71 592h3v3h-3zM79 579h3v3h-3zM87 576h3v3h-3zM95 576h3v3h-3zM103 575h3v3h-3zM111 577h3v3h-3zM119 581h3v3h-3zM127 594h3v3h-3zM136 577h3v3h-3zM144 578h3v3h-3zM152 590h3v3h-3zM160 602h3v3h-3zM168 602h3v3h-3zM176 603h3v3h-3zM184 603h3v3h-3zM192 603h3v3h-3zM201 603h3v3h-3zM209 602h3v3h-3zM217 585h3v3h-3zM225 578h3v3h-3zM233 581h3v3h-3zM241 593h3v3h-3zM249 595h3v3h-3zM257 602h3v3h-3zM266 603h3v3h-3zM274 603h3v3h-3zM282 602h3v3h-3zM290 598h3v3h-3zM298 580h3v3h-3zM306 577h3v3h-3zM314 577h3v3h-3zM322 578h3v3h-3zM331 576h3v3h-3zM339 578h3v3h-3zM347 589h3v3h-3zM355 592h3v3h-3zM363 598h3v3h-3zM371 599h3v3h-3zM379 595h3v3h-3zM387 580h3v3h-3zM396 578h3v3h-3zM404 583h3v3h-3zM412 602h3v3h-3zM420 603h3v3h-3zM428 603h3v3h-3zM436 601h3v3h-3zM444 599h3v3h-3zM452 582h3v3h-3zM461 578h3v3h-3zM469 571h3v3h-3zM477 569h3v3h-3zM485 602h3v3h-3zM493 602h3v3h-3zM501 573h3v3h-3zM509 571h3v3h-3zM517 571h3v3h-3zM526 572h3v3h-3zM534 574h3v3h-3zM542 576h3v3h-3zM550 583h3v3h-3zM558 581h3v3h-3zM566 572h3v3h-3zM574 572h3v3h-3zM582 571h3v3h-3zM591 571h3v3h-3zM599 571h3v3h-3zM607 571h3v3h-3zM615 571h3v3h-3zM623 571h3v3h-3zM631 571h3v3h-3zM639 571h3v3h-3zM647 572h3v3h-3zM656 572h3v3h-3zM664 573h3v3h-3zM672 573h3v3h-3zM680 572h3v3h-3zM688 573h3v3h-3zM696 574h3v3h-3zM704 575h3v3h-3zM712 575h3v3h-3zM721 576h3v3h-3zM729 579h3v3h-3zM737 580h3v3h-3zM745 586h3v3h-3zM753 599h3v3h-3zM761 602h3v3h-3zM769 602h3v3h-3zM777 602h3v3h-3zM786 602h3v3h-3zM794 602h3v3h-3zM802 602h3v3h-3zM810 602h3v3h-3zM818 602h3v3h-3zM826 603h3v3h-3zM834 597h3v3h-3zM842 580h3v3h-3zM851 594h3v3h-3zM859 603h3v3h-3zM867 602h3v3h-3zM875 581h3v3h-3zM883 578h3v3h-3zM891 582h3v3h-3zM899 601h3v3h-3zM907 603h3v3h-3zM916 602h3v3h-3zM924 602h3v3h-3zM932 601h3v3h-3zM940 582h3v3h-3zM948 575h3v3h-3zM956 575h3v3h-3zM964 575h3v3h-3zM972 579h3v3h-3zM981 598h3v3h-3zM989 602h3v3h-3zM997 603h3v3h-3zM1005 603h3v3h-3z" fill="#00ff00" shape-rendering="crispEdges"/><path d="M762.5 525V615" stroke="#ffff00" stroke-width="1" stroke-dasharray="3 3" shape-rendering="crispEdges"/><rect x="763" y="601" width="36" height="14" fill="#000060"/><text x="763.5" y="613" font-size="13" letter-spacing="0.9" fill="#00ff00" stroke="#00ff00" stroke-width="0.3">0.140</text></g>
<text x="58.5" y="536" text-anchor="end" font-size="11" fill="#ffffff">2</text>
<text x="58.5" y="575" text-anchor="end" font-size="11" fill="#ffffff">1</text>
<text x="58.5" y="614" text-anchor="end" font-size="11" fill="#ffffff">0</text>
<rect x="0" y="615" width="1001" height="1" fill="#d4d0c8"/>
<clipPath id="c6"><rect x="62" y="616" width="938" height="90"/></clipPath>
<g clip-path="url(#c6)"><path d="M62.5 616V706M99.5 616V706M136.5 616V706M173.5 616V706M210.5 616V706M247.5 616V706M284.5 616V706M321.5 616V706M358.5 616V706M395.5 616V706M432.5 616V706M469.5 616V706M506.5 616V706M543.5 616V706M580.5 616V706M617.5 616V706M654.5 616V706M691.5 616V706M728.5 616V706M765.5 616V706M802.5 616V706M839.5 616V706M876.5 616V706M913.5 616V706M950.5 616V706M987.5 616V706M62 637.5H1000M62 672.5H1000" stroke="#302e24" stroke-width="1" stroke-dasharray="3 3" fill="none" shape-rendering="crispEdges"/><text x="530.5" y="633" text-anchor="middle" font-size="16" letter-spacing="0.6" fill="#eeeeee" stroke="#eeeeee" stroke-width="0.3">Датч. угла повор. коленч. вала, об/мин</text><polyline points="57.5,683.5 65.5,683.5 74.5,683.5 82.5,683.5 90.5,683.5 98.5,683.5 106.5,683.5 114.5,684.5 122.5,683.5 130.5,684.5 139.5,683.5 147.5,683.5 155.5,684.5 163.5,683.5 171.5,683.5 179.5,683.5 187.5,683.5 195.5,683.5 204.5,683.5 212.5,682.5 220.5,683.5 228.5,683.5 236.5,683.5 244.5,682.5 252.5,683.5 260.5,683.5 269.5,683.5 277.5,683.5 285.5,683.5 293.5,683.5 301.5,683.5 309.5,683.5 317.5,682.5 325.5,683.5 334.5,683.5 342.5,683.5 350.5,683.5 358.5,683.5 366.5,683.5 374.5,683.5 382.5,683.5 390.5,683.5 399.5,682.5 407.5,683.5 415.5,683.5 423.5,683.5 431.5,683.5 439.5,683.5 447.5,683.5 455.5,684.5 464.5,683.5 472.5,663.5 480.5,649.5 488.5,661.5 496.5,670.5 504.5,676.5 512.5,679.5 520.5,681.5 529.5,682.5 537.5,682.5 545.5,683.5 553.5,682.5 561.5,683.5 569.5,683.5 577.5,683.5 585.5,683.5 594.5,683.5 602.5,684.5 610.5,684.5 618.5,684.5 626.5,684.5 634.5,684.5 642.5,684.5 650.5,684.5 659.5,684.5 667.5,685.5 675.5,685.5 683.5,684.5 691.5,684.5 699.5,684.5 707.5,684.5 715.5,684.5 724.5,683.5 732.5,684.5 740.5,684.5 748.5,684.5 756.5,683.5 764.5,684.5 772.5,684.5 780.5,684.5 789.5,683.5 797.5,684.5 805.5,683.5 813.5,683.5 821.5,683.5 829.5,683.5 837.5,683.5 845.5,683.5 854.5,683.5 862.5,683.5 870.5,682.5 878.5,683.5 886.5,683.5 894.5,683.5 902.5,683.5 910.5,683.5 919.5,683.5 927.5,683.5 935.5,684.5 943.5,683.5 951.5,683.5 959.5,683.5 967.5,683.5 975.5,683.5 984.5,683.5 992.5,683.5 1000.5,683.5 1008.5,683.5" stroke="#00ff00" stroke-width="1" fill="none" shape-rendering="crispEdges"/><path d="M56 682h3v3h-3zM64 682h3v3h-3zM73 682h3v3h-3zM81 682h3v3h-3zM89 682h3v3h-3zM97 682h3v3h-3zM105 682h3v3h-3zM113 683h3v3h-3zM121 682h3v3h-3zM129 683h3v3h-3zM138 682h3v3h-3zM146 682h3v3h-3zM154 683h3v3h-3zM162 682h3v3h-3zM170 682h3v3h-3zM178 682h3v3h-3zM186 682h3v3h-3zM194 682h3v3h-3zM203 682h3v3h-3zM211 681h3v3h-3zM219 682h3v3h-3zM227 682h3v3h-3zM235 682h3v3h-3zM243 681h3v3h-3zM251 682h3v3h-3zM259 682h3v3h-3zM268 682h3v3h-3zM276 682h3v3h-3zM284 682h3v3h-3zM292 682h3v3h-3zM300 682h3v3h-3zM308 682h3v3h-3zM316 681h3v3h-3zM324 682h3v3h-3zM333 682h3v3h-3zM341 682h3v3h-3zM349 682h3v3h-3zM357 682h3v3h-3zM365 682h3v3h-3zM373 682h3v3h-3zM381 682h3v3h-3zM389 682h3v3h-3zM398 681h3v3h-3zM406 682h3v3h-3zM414 682h3v3h-3zM422 682h3v3h-3zM430 682h3v3h-3zM438 682h3v3h-3zM446 682h3v3h-3zM454 683h3v3h-3zM463 682h3v3h-3zM471 662h3v3h-3zM479 648h3v3h-3zM487 660h3v3h-3zM495 669h3v3h-3zM503 675h3v3h-3zM511 678h3v3h-3zM519 680h3v3h-3zM528 681h3v3h-3zM536 681h3v3h-3zM544 682h3v3h-3zM552 681h3v3h-3zM560 682h3v3h-3zM568 682h3v3h-3zM576 682h3v3h-3zM584 682h3v3h-3zM593 682h3v3h-3zM601 683h3v3h-3zM609 683h3v3h-3zM617 683h3v3h-3zM625 683h3v3h-3zM633 683h3v3h-3zM641 683h3v3h-3zM649 683h3v3h-3zM658 683h3v3h-3zM666 684h3v3h-3zM674 684h3v3h-3zM682 683h3v3h-3zM690 683h3v3h-3zM698 683h3v3h-3zM706 683h3v3h-3zM714 683h3v3h-3zM723 682h3v3h-3zM731 683h3v3h-3zM739 683h3v3h-3zM747 683h3v3h-3zM755 682h3v3h-3zM763 683h3v3h-3zM771 683h3v3h-3zM779 683h3v3h-3zM788 682h3v3h-3zM796 683h3v3h-3zM804 682h3v3h-3zM812 682h3v3h-3zM820 682h3v3h-3zM828 682h3v3h-3zM836 682h3v3h-3zM844 682h3v3h-3zM853 682h3v3h-3zM861 682h3v3h-3zM869 681h3v3h-3zM877 682h3v3h-3zM885 682h3v3h-3zM893 682h3v3h-3zM901 682h3v3h-3zM909 682h3v3h-3zM918 682h3v3h-3zM926 682h3v3h-3zM934 683h3v3h-3zM942 682h3v3h-3zM950 682h3v3h-3zM958 682h3v3h-3zM966 682h3v3h-3zM974 682h3v3h-3zM983 682h3v3h-3zM991 682h3v3h-3zM999 682h3v3h-3zM1007 682h3v3h-3z" fill="#00ff00" shape-rendering="crispEdges"/><path d="M762.5 616V706" stroke="#ffff00" stroke-width="1" stroke-dasharray="3 3" shape-rendering="crispEdges"/><rect x="763" y="684" width="25" height="14" fill="#000060"/><text x="763.5" y="696" font-size="13" letter-spacing="0.9" fill="#00ff00" stroke="#00ff00" stroke-width="0.3">642</text><rect x="965" y="690" width="32" height="13" fill="#e4e4e4"/><text x="965" y="701" font-size="11" letter-spacing="-0.3" fill="#000060" stroke="#000060" stroke-width="0.3">2 s/div</text></g>
<text x="58.5" y="642" text-anchor="end" font-size="11" fill="#ffffff">2000</text>
<text x="58.5" y="677" text-anchor="end" font-size="11" fill="#ffffff">1000</text>
<rect x="0" y="706" width="1001" height="4" fill="#e8e6de"/>
<rect x="0" y="706" width="1001" height="1" fill="#fbfbf7"/>
<rect x="0" y="707" width="1001" height="1" fill="#d9d7ce"/>
<rect x="560" y="708" width="144" height="2" fill="#f3f2ec"/>
<rect x="559" y="707" width="1" height="3" fill="#c8c5b9"/><rect x="704" y="707" width="1" height="3" fill="#c8c5b9"/>
<rect x="1" y="708" width="4" height="2" fill="#f3f2ec"/><rect x="5" y="707" width="1" height="3" fill="#c8c5b9"/>
<rect x="987" y="708" width="13" height="2" fill="#f3f2ec"/><rect x="986" y="707" width="1" height="3" fill="#c8c5b9"/>
</svg>
</body></html>
